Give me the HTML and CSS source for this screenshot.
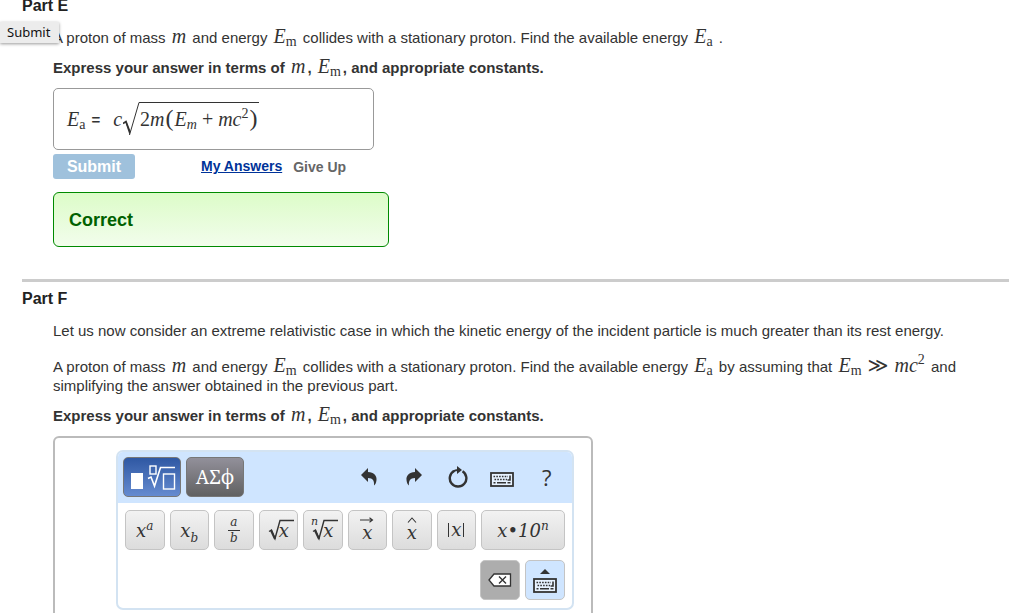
FILE: index.html
```
<!DOCTYPE html>
<html lang="en">
<head>
  <meta charset="UTF-8" />
  <meta name="viewport" content="width=device-width, initial-scale=1.0" />
  <title>Available Energy</title>
  <link rel="stylesheet" href="styles.css">
</head>
<body>

  <main class="page">
    <section class="part">
      <h2>Part E</h2>
      <div class="part-body">
        <p>A proton of mass <i class="math">m</i> and energy <span class="math"><i>E</i><sub>m</sub></span> collides with a stationary proton. Find the available energy <span class="math"><i>E</i><sub>a</sub></span> .</p>
        <p class="instructions">Express your answer in terms of <i class="math">m</i>, <span class="math"><i>E</i><sub>m</sub></span>, and appropriate constants.</p>

        <div class="answer">
          <span class="math"><i>E</i><sub>a</sub></span>
          <span class="equals">=</span>
          <span class="math formula">
            <i>c</i>
            <svg class="radical" width="17" height="34" viewBox="0 0 17 34">
              <path d="M0 21.5 L3 19.5 L7 30" fill="none" stroke="#333" stroke-width="1.6" />
              <path d="M6.5 33 L16 0.5 H17" fill="none" stroke="#333" stroke-width="1" />
              <path d="M2.2 20 L3.4 19.4 L7.2 30 L6.6 33 Z" fill="#333" />
            </svg>
            <span class="radicand">2<i>m</i><span class="paren">(</span><i>E<sub>m</sub></i><span class="plus">+</span><i>mc</i><sup>2</sup><span class="paren">)</span></span>
          </span>
        </div>

        <div class="actions">
          <button class="submit" disabled>Submit</button>
          <a class="my-answers" href="#answers">My Answers</a>
          <button class="give-up" disabled>Give Up</button>
        </div>

        <div class="feedback">Correct</div>
      </div>
    </section>

    <section class="part part-next">
      <h2>Part F</h2>
      <div class="part-body">
        <p class="intro">Let us now consider an extreme relativistic case in which the kinetic energy of the incident particle is much greater than its rest energy.</p>
        <p>A proton of mass <i class="math">m</i> and energy <span class="math"><i>E</i><sub>m</sub></span> collides with a stationary proton. Find the available energy <span class="math"><i>E</i><sub>a</sub></span> by assuming that <span class="math"><i>E</i><sub>m</sub> <span class="much">≫</span> <i>mc</i><sup>2</sup></span> and simplifying the answer obtained in the previous part.</p>
        <p class="instructions">Express your answer in terms of <i class="math">m</i>, <span class="math"><i>E</i><sub>m</sub></span>, and appropriate constants.</p>

        <div class="editor">
          <div class="keypad">
            <div class="keypad-bar">
              <button class="tab active" aria-label="Templates">
                <svg width="48" height="30" viewBox="0 0 48 30">
                  <rect x="3" y="11" width="12" height="16" fill="#fff" />
                  <rect x="22" y="4" width="6" height="8" fill="none" stroke="#fff" stroke-width="1.4" />
                  <path d="M20 16.5 L23 15 L26.5 24 L32.5 5.5 H47" fill="none" stroke="#fff" stroke-width="1.6" />
                  <rect x="35.5" y="12" width="11" height="15" fill="none" stroke="#fff" stroke-width="1.4" />
                </svg>
              </button>
              <button class="tab">ΑΣϕ</button>
              <div class="tools">
                <button aria-label="Undo">
                  <svg width="18" height="20" viewBox="0 0 18 20">
                    <path d="M1 8 L8 1 V5 C14 5 17 9 16.5 13 C16.3 16 15 18 14 18.5 C14.5 14 13 11 8 11 V15 Z" fill="#333" />
                  </svg>
                </button>
                <button aria-label="Redo">
                  <svg width="18" height="20" viewBox="0 0 18 20">
                    <path d="M17 8 L10 1 V5 C4 5 1 9 1.5 13 C1.7 16 3 18 4 18.5 C3.5 14 5 11 10 11 V15 Z" fill="#333" />
                  </svg>
                </button>
                <button aria-label="Reset">
                  <svg width="20" height="22" viewBox="0 0 20 22">
                    <path d="M6 5 A8.3 8.3 0 1 0 14.5 5.2" fill="none" stroke="#333" stroke-width="2.4" />
                    <path d="M9 0 L14 4 L9 8 Z" fill="#333" />
                    <path d="M5 5.6 Q7.5 4 10 4" fill="none" stroke="#333" stroke-width="2.2" />
                  </svg>
                </button>
                <button class="low" aria-label="Keyboard shortcuts">
                  <svg width="24" height="15" viewBox="0 0 24 15">
                    <rect x="1" y="1" width="22" height="13" fill="#fff" fill-opacity="0.5" stroke="#333" stroke-width="1.8" />
                    <path d="M3.5 4.5 H18 M4.5 7.5 H17" stroke="#333" stroke-width="1.7" stroke-dasharray="1.6 1.2" />
                    <path d="M3.5 10.8 H5.5 M7 10.8 H16 M17.5 10.8 H20.5 M20 3.5 V8 H17.5" fill="none" stroke="#333" stroke-width="1.6" />
                  </svg>
                </button>
                <button class="help" aria-label="Help">?</button>
              </div>
            </div>

            <div class="keys">
              <div class="key-row">
                <button class="key"><span>x<sup>a</sup></span></button>
                <button class="key"><span>x<sub>b</sub></span></button>
                <button class="key"><span class="fraction"><span>a</span><span>b</span></span></button>
                <button class="key root">
                  <svg width="26" height="22" viewBox="0 0 26 22">
                    <path d="M1 12.5 L3.5 11 L7 19.5 L12 1.5 H26" fill="none" stroke="#333" stroke-width="1.4" />
                    <path d="M3 11.5 L7 20" stroke="#333" stroke-width="2" />
                  </svg>
                  <span>x</span>
                </button>
                <button class="key root">
                  <svg width="26" height="22" viewBox="0 0 26 22">
                    <path d="M1 12.5 L3.5 11 L7 19.5 L12 1.5 H26" fill="none" stroke="#333" stroke-width="1.4" />
                    <path d="M3 11.5 L7 20" stroke="#333" stroke-width="2" />
                  </svg>
                  <span>x</span>
                  <small>n</small>
                </button>
                <button class="key accent">
                  <svg width="14" height="6" viewBox="0 0 14 6">
                    <path d="M0 3 H12 M9.5 0.8 L12.5 3 L9.5 5.2" fill="none" stroke="#333" stroke-width="1.1" />
                  </svg>
                  <span>x</span>
                </button>
                <button class="key accent">
                  <svg width="10" height="6" viewBox="0 0 10 6">
                    <path d="M1 5.5 L5 1 L9 5.5" fill="none" stroke="#333" stroke-width="1.1" />
                  </svg>
                  <span>x</span>
                </button>
                <button class="key"><span class="absolute-value">x</span></button>
                <button class="key wide"><span>x•10<sup>n</sup></span></button>
              </div>
              <div class="key-row end">
                <button class="key delete" aria-label="Delete">
                  <svg width="24" height="14" viewBox="0 0 24 14">
                    <path d="M1 7 L6 1 H22.5 V13 H6 Z" fill="#fff" stroke="#333" stroke-width="1.3" />
                    <path d="M11 3.5 L18 10.5 M18 3.5 L11 10.5" stroke="#333" stroke-width="1.4" />
                  </svg>
                </button>
                <button class="key toggle" aria-label="Show keyboard">
                  <svg width="24" height="25" viewBox="0 0 24 25">
                    <path d="M7 6 L12 1 L17 6 Z" fill="#333" />
                    <rect x="1" y="11" width="22" height="13" fill="#fff" fill-opacity="0.5" stroke="#333" stroke-width="1.8" />
                    <path d="M3.5 14.5 H18 M4.5 17.5 H17" stroke="#333" stroke-width="1.7" stroke-dasharray="1.6 1.2" />
                    <path d="M3.5 20.8 H5.5 M7 20.8 H16 M17.5 20.8 H20.5 M20 13.5 V18 H17.5" fill="none" stroke="#333" stroke-width="1.6" />
                  </svg>
                </button>
              </div>
            </div>
          </div>
        </div>
      </div>
    </section>
  </main>

  <div class="tooltip" role="tooltip">Submit</div>

</body>
</html>
```
FILE: styles.css
```
* {
  box-sizing: border-box;
}

body {
  margin: 0;
  background: #ffffff;
  color: #333333;
  font-family: "Liberation Sans", Arial, sans-serif;
  font-size: 15px;
  line-height: 19px;
}

button {
  margin: 0;
  padding: 0;
  border: none;
  background: none;
  font-family: inherit;
  color: inherit;
}

svg {
  display: block;
}

.page {
  height: 100vh;
  padding: 0 15px 0 22px;
  overflow: hidden;
}

.part h2 {
  margin: 0;
  color: #222222;
  font-size: 16px;
  line-height: 20px;
}

/* the page is scrolled a little past the first heading */
.part:first-child {
  margin-top: -4px;
}

.part-next {
  margin-top: 32px;
  padding-top: 7px;
  border-top: 3px solid #cccccc;
}

.part-body {
  padding: 12px 0 0 31px;
}

.part p {
  margin: 0 0 11px;
}

.part .intro {
  margin-bottom: 17px;
}

.instructions {
  font-weight: bold;
}

/* Math */
.math {
  padding: 0 2px;
  font-family: "Liberation Serif", "Times New Roman", serif;
  font-size: 20px;
  font-weight: normal;
  line-height: 0;
  white-space: nowrap;
}

.math sub,
.math sup {
  font-size: 14px;
  line-height: 0;
}

.math sub {
  vertical-align: -3px;
}

.math sup {
  vertical-align: 8px;
}

.much {
  padding: 0 1px;
  font-family: "DejaVu Sans", sans-serif;
  font-size: 20px;
}

.answer {
  display: flex;
  align-items: center;
  max-width: 321px;
  height: 62px;
  padding: 0 11px;
  border: 1px solid #999999;
  border-radius: 5px;
}

.answer .math {
  line-height: 32px;
}

.equals {
  margin: 0 11px 0 4px;
  font-weight: bold;
}

.formula {
  display: flex;
  align-items: center;
}

.radical {
  margin-left: 1px;
}

.radicand {
  height: 34px;
  border-top: 1px solid #333333;
}

.paren {
  padding: 0 1px;
  font-size: 24px;
  line-height: 0;
}

.plus {
  margin: 0 5px;
}

/* Buttons under the answer */
.actions {
  display: flex;
  align-items: center;
  margin-top: 4px;
  font-size: 14px;
  font-weight: bold;
}

.submit {
  width: 82px;
  height: 25px;
  margin-right: 66px;
  border-radius: 3px;
  background: #9fc1dc;
  color: #ffffff;
  font-size: 16px;
  font-weight: bold;
}

.my-answers {
  margin-right: 11px;
  color: #003399;
}

.give-up {
  color: #666666;
  font-size: 14px;
  font-weight: bold;
}

.feedback {
  max-width: 336px;
  margin-top: 13px;
  padding: 18px 15px 17px;
  border: 1px solid #008a00;
  border-radius: 6px;
  background: linear-gradient(#dcfcc8, #f2fdec);
  color: #006100;
  font-size: 18px;
  font-weight: bold;
  line-height: 18px;
}

/* Equation editor */
.editor {
  max-width: 540px;
  height: 240px;
  padding: 12px 17px 0 61px;
  border: 2px solid #bbbbbb;
  border-radius: 6px;
}

.keypad {
  border: 2px solid #d3e3f2;
  border-radius: 7px;
  background: #ffffff;
}

.keypad-bar {
  display: flex;
  align-items: center;
  gap: 5px;
  padding: 5px 3px 6px 5px;
  background: #cfe5ff;
  border-radius: 5px 5px 0 0;
}

.tab {
  display: flex;
  align-items: center;
  justify-content: center;
  width: 58px;
  height: 40px;
  border: 1px solid #777777;
  border-radius: 5px;
  background: linear-gradient(#92909a, #616161);
  color: #ffffff;
  font-family: "Noto Serif", "DejaVu Serif", serif;
  font-size: 19px;
}

.tab.active {
  background: linear-gradient(#2f58a3, #658bd0);
}

.tools {
  display: flex;
  width: 222px;
  margin-left: auto;
}

.tools button {
  display: flex;
  flex: 1;
  align-items: center;
  justify-content: center;
  height: 40px;
}

.tools .low {
  padding-top: 4px;
}

.tools .help {
  font-family: "Open Sans", sans-serif;
  font-size: 22px;
}

.keys {
  display: grid;
  gap: 10px;
  padding: 7px 7px 8px;
}

.key-row {
  display: flex;
  gap: 5px;
}

.key-row.end {
  justify-content: flex-end;
}

.key {
  position: relative;
  display: flex;
  flex: 1;
  align-items: center;
  justify-content: center;
  height: 40px;
  border: 1px solid #c4c4c4;
  border-radius: 5px;
  background: linear-gradient(#f2f2f2, #dcdcdc);
  font-family: "DejaVu Serif", serif;
  font-size: 18px;
  font-style: italic;
}

.key sup,
.key sub {
  font-size: 12px;
  line-height: 0;
}

.key.wide {
  flex: 0 0 84px;
}

.fraction {
  display: grid;
  width: 12px;
  font-size: 12px;
  line-height: 15px;
}

.fraction span:first-child {
  border-bottom: 1px solid #333333;
}

.root span {
  margin-left: -15px;
}

.root small {
  position: absolute;
  top: 5px;
  left: 7px;
  font-size: 11px;
  line-height: 12px;
}

.accent {
  flex-direction: column;
  line-height: 20px;
}

.absolute-value {
  padding: 0 2px;
  border: solid #333333;
  border-width: 0 1px;
  line-height: 14px;
}

.key.delete,
.key.toggle {
  flex: 0 0 40px;
}

.key.delete {
  background: #adadad;
}

.key.toggle {
  background: #cfe5ff;
}

.tooltip {
  position: absolute;
  top: 22px;
  left: 0;
  padding: 1px 9px 1px 7px;
  background: #ececec;
  box-shadow: 0 1px 3px rgba(0, 0, 0, 0.4);
  color: #111111;
  font-family: "Noto Sans", sans-serif;
  font-size: 13px;
}
```
